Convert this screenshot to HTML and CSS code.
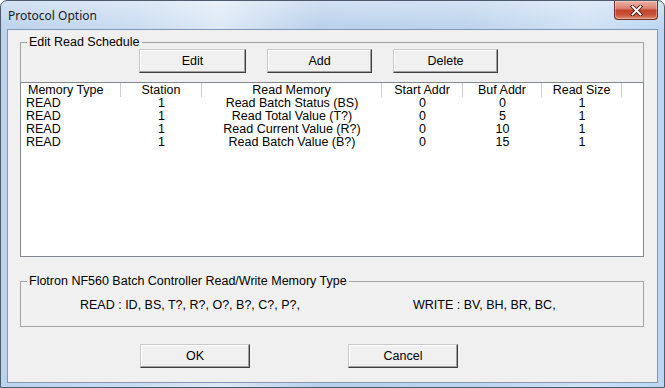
FILE: index.html
```html
<!DOCTYPE html>
<html lang="en">
<head>
  <meta charset="UTF-8" />
  <meta name="viewport" content="width=device-width, initial-scale=1" />
  <title>Protocol Option</title>
  <link rel="stylesheet" href="styles.css">
</head>
<body>
  <div class="window">
    <div class="titlebar">
      <span class="title">Protocol Option</span>
      <span class="close-btn">
        <svg width="13" height="11" viewBox="0 0 13 11">
          <path d="M2.5 1.5 L10.5 9.5 M10.5 1.5 L2.5 9.5" stroke="#4a1d15" stroke-width="3.6" stroke-linecap="square" fill="none" />
          <path d="M2.5 1.5 L10.5 9.5 M10.5 1.5 L2.5 9.5" stroke="#ffffff" stroke-width="1.8" stroke-linecap="square" fill="none" />
        </svg>
      </span>
    </div>

    <div class="client">
      <fieldset class="group group-schedule">
        <legend>Edit Read Schedule</legend>
        <div class="toolbar">
          <button class="btn btn-edit">Edit</button>
          <button class="btn btn-add">Add</button>
          <button class="btn btn-delete">Delete</button>
        </div>

        <div class="listview">
          <div class="lv-row lv-header">
            <div class="lv-cell left">Memory Type</div>
            <div class="lv-cell">Station</div>
            <div class="lv-cell">Read Memory</div>
            <div class="lv-cell">Start Addr</div>
            <div class="lv-cell">Buf Addr</div>
            <div class="lv-cell">Read Size</div>
            <div class="lv-cell filler"></div>
          </div>
          <div class="lv-row">
            <div class="lv-cell left">READ</div>
            <div class="lv-cell">1</div>
            <div class="lv-cell">Read Batch Status (BS)</div>
            <div class="lv-cell">0</div>
            <div class="lv-cell">0</div>
            <div class="lv-cell">1</div>
          </div>
          <div class="lv-row">
            <div class="lv-cell left">READ</div>
            <div class="lv-cell">1</div>
            <div class="lv-cell">Read Total Value (T?)</div>
            <div class="lv-cell">0</div>
            <div class="lv-cell">5</div>
            <div class="lv-cell">1</div>
          </div>
          <div class="lv-row">
            <div class="lv-cell left">READ</div>
            <div class="lv-cell">1</div>
            <div class="lv-cell">Read Current Value (R?)</div>
            <div class="lv-cell">0</div>
            <div class="lv-cell">10</div>
            <div class="lv-cell">1</div>
          </div>
          <div class="lv-row">
            <div class="lv-cell left">READ</div>
            <div class="lv-cell">1</div>
            <div class="lv-cell">Read Batch Value (B?)</div>
            <div class="lv-cell">0</div>
            <div class="lv-cell">15</div>
            <div class="lv-cell">1</div>
          </div>
        </div>
      </fieldset>

      <fieldset class="group group-memtype">
        <legend>Flotron NF560 Batch Controller Read/Write Memory Type</legend>
        <div class="memtype">
          <span>READ : ID, BS, T?, R?, O?, B?, C?, P?,</span>
          <span>WRITE : BV, BH, BR, BC,</span>
        </div>
      </fieldset>

      <div class="dialog-buttons">
        <button class="btn btn-dialog">OK</button>
        <button class="btn btn-dialog">Cancel</button>
      </div>
    </div>
  </div>
</body>
</html>
```

FILE: styles.css
```css
body {
  margin: 0;
  font-family: "Liberation Sans", Arial, sans-serif;
  font-size: 12.5px;
  color: #000;
  background: #fff;
}

/* window frame */
.window {
  width: 665px;
  height: 388px;
  box-sizing: border-box;
  border: 1px solid #4d5b6c;
  border-radius: 7px 7px 0 0;
  padding: 0 6px 4px;
  display: flex;
  flex-direction: column;
  background:
    linear-gradient(to bottom, rgba(255,255,255,0.35), rgba(255,255,255,0) 28px),
    linear-gradient(to right, #bcd3ec 0%, #c9dcf1 20%, #dde9f6 33%, #b9d0eb 48%, #bcd3ed 70%, #cfe1f4 88%, #bcd6f2 100%);
}

.titlebar {
  height: 28px;
  display: flex;
  align-items: flex-start;
  justify-content: space-between;
}

.title {
  font-family: "Noto Sans", "Liberation Sans", sans-serif;
  font-size: 12px;
  line-height: 16px;
  margin: 7px 0 0 1px;
  color: #1b1b1b;
}

.close-btn {
  width: 44px;
  height: 19px;
  box-sizing: border-box;
  border: 1px solid #6e3329;
  border-top: none;
  border-radius: 0 0 4px 4px;
  background: linear-gradient(to bottom, #eab2a5 0%, #dc8574 40%, #c4432b 52%, #c95239 75%, #dc8a70 100%);
  box-shadow: inset 0 0 0 1px rgba(255,255,255,0.3);
  display: flex;
  align-items: center;
  justify-content: center;
}

.client {
  flex: 1;
  border: 1px solid #8197b4;
  background: #f0f0f0;
  display: flex;
  flex-direction: column;
}

/* group boxes */
.group {
  margin: 5px 13px 0 12px;
  padding: 0;
  border: 1px solid #a3a3a3;
  min-width: 0;
}

.group legend {
  margin-left: 6px;
  padding: 0 2px;
  line-height: 14px;
}

.toolbar {
  display: flex;
  gap: 21px;
  margin-left: 118px;
}

.btn {
  height: 24px;
  width: 107px;
  padding: 0;
  font: inherit;
  color: #000;
  background: #f0f0f0;
  border: 1px solid;
  border-color: #c9c9c9 #3f3f3f #3f3f3f #c9c9c9;
  box-shadow: inset -1px -1px 0 #a0a0a0, inset 1px 1px 0 #fff;
}

.btn-add,
.btn-delete {
  width: 105px;
}

/* list view */
.listview {
  margin: 9px -1px -2px;
  height: 175px;
  box-sizing: border-box;
  border: 1px solid #828790;
  background: #fff;
}

.lv-row {
  display: grid;
  grid-template-columns: 100px 81px 180px 81px 79px 80px 1fr;
  line-height: 13px;
}

.lv-header {
  line-height: 14px;
}

.lv-cell {
  text-align: center;
  white-space: nowrap;
  overflow: hidden;
}

.lv-cell.left {
  text-align: left;
  padding-left: 5px;
}

.lv-header .lv-cell {
  border-right: 1px solid #cfcfcf;
}

.lv-header .lv-cell.left {
  padding-left: 7px;
}

.lv-header .lv-cell.filler {
  border-right: none;
}

/* memory type box */
.group-memtype {
  margin-top: 18px;
  padding: 10px 0 14px;
}

.memtype {
  display: grid;
  grid-template-columns: 333px auto;
  padding-left: 59px;
  line-height: 14px;
}

.dialog-buttons {
  display: flex;
  gap: 98px;
  margin: 17px 0 0 132px;
}

.btn-dialog {
  width: 110px;
}
```
